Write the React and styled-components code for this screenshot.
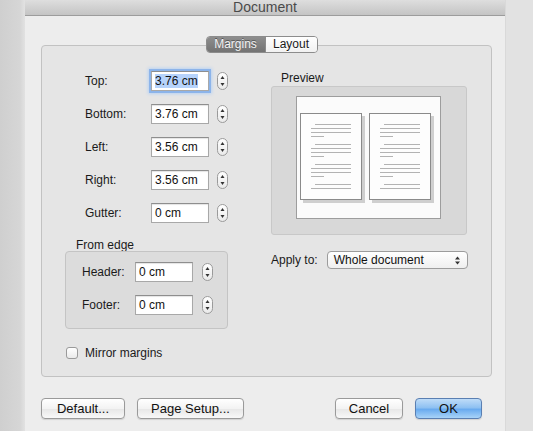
import styled, { createGlobalStyle } from "styled-components";

const GlobalStyle = createGlobalStyle`
  html, body {
    margin: 0;
    padding: 0;
    background: #d4d4d4;
    font-family: "Liberation Sans", Arial, sans-serif;
  }
`;

const Screen = styled.div`
  width: 533px;
  height: 431px;
  overflow: hidden;
  display: flex;
  background: linear-gradient(90deg, #cfcfcf 0px, #d6d6d6 20px, #e2e2e2 25px);
`;

const Window = styled.div`
  margin-left: 25px;
  width: 480px;
  height: 460px;
  background: #ededed;
  display: flex;
  flex-direction: column;
  box-shadow: 1px 0 0 #d9d9d9;
`;

const TitleBar = styled.div`
  height: 15px;
  background: linear-gradient(#dedede, #c4c4c4);
  border-bottom: 1px solid #9c9c9c;
  text-align: center;
  font-size: 14px;
  line-height: 14px;
  color: #4a4a4a;
  overflow: hidden;
`;

const Body = styled.div`
  padding: 20px 13px 0 16px;
  display: flex;
  flex-direction: column;
`;

const Tabs = styled.div`
  align-self: center;
  margin-right: 10px;
  display: flex;
  height: 17px;
  border: 1px solid #8c8c8c;
  border-radius: 4px;
  overflow: hidden;
  position: relative;
  z-index: 1;
  margin-bottom: -8px;
  box-sizing: border-box;
`;

const Tab = styled.div`
  height: 15px;
  line-height: 15px;
  font-size: 12px;
  width: ${(p) => (p.$active ? "58px" : "52px")};
  box-sizing: border-box;
  text-align: center;
  color: ${(p) => (p.$active ? "#f4f4f4" : "#1a1a1a")};
  background: ${(p) =>
    p.$active
      ? "linear-gradient(#8e8e8e, #737373)"
      : "linear-gradient(#ffffff, #f1f1f1)"};
  border-left: ${(p) => (p.$active ? "none" : "1px solid #8c8c8c")};
  text-shadow: ${(p) => (p.$active ? "0 -1px 0 #555" : "0 1px 0 #fff")};
`;

const TabBox = styled.div`
  height: 332px;
  box-sizing: border-box;
  background: #e5e5e5;
  border: 1px solid #c2c2c2;
  border-radius: 4px;
  display: grid;
  grid-template-columns: 163px 196px;
  column-gap: 43px;
  padding: 25px 0 0 23px;
`;

const LeftCol = styled.div`
  display: flex;
  flex-direction: column;
`;

const Rows = styled.div`
  display: flex;
  flex-direction: column;
  gap: 13px;
  padding-left: ${(p) => p.$indent}px;
`;

const Row = styled.div`
  display: flex;
  align-items: center;
  height: 20px;
`;

const Label = styled.span`
  width: ${(p) => p.$w}px;
  font-size: 12px;
  color: #1a1a1a;
`;

const Field = styled.div`
  width: 58px;
  height: 20px;
  box-sizing: border-box;
  background: #fff;
  border: 1px solid #a8a8a8;
  border-top-color: #8e8e8e;
  font-size: 12px;
  line-height: 18px;
  padding-left: 3px;
  color: #111;
  box-shadow: ${(p) => (p.$focus ? "0 0 0 2px #8cb4ea, 0 0 3px 3px #b9d2f3" : "inset 0 1px 1px #e4e4e4")};
`;

const Selected = styled.span`
  background: #b6d3fb;
`;

const StepperBox = styled.div`
  margin-left: ${(p) => p.$gap}px;
  width: 11px;
  height: 18px;
  display: flex;
`;

const GroupTitle = styled.div`
  font-size: 12px;
  color: #1a1a1a;
  margin: 15px 0 0 11px;
  line-height: 14px;
`;

const GroupBox = styled.div`
  margin-top: -1px;
  height: 78px;
  box-sizing: border-box;
  border: 1px solid #c4c4c4;
  border-radius: 4px;
  background: #dcdcdc;
  padding-top: 10px;
`;

const CheckRow = styled.label`
  display: flex;
  align-items: center;
  margin: 17px 0 0 1px;
  font-size: 12px;
  color: #1a1a1a;
`;

const CheckBox = styled.span`
  width: 12px;
  height: 12px;
  box-sizing: border-box;
  border: 1px solid #9a9a9a;
  border-radius: 3px;
  background: linear-gradient(#ffffff, #eaeaea);
  margin-right: 7px;
`;

const RightCol = styled.div`
  display: flex;
  flex-direction: column;
`;

const PreviewTitle = styled.div`
  font-size: 12px;
  color: #1a1a1a;
  margin: 0 0 1px 10px;
  line-height: 14px;
`;

const PreviewBox = styled.div`
  height: 149px;
  box-sizing: border-box;
  border: 1px solid #c8c8c8;
  border-radius: 3px;
  background: #d8d8d8;
  padding: 9px 0 0 24px;
`;

const ApplyRow = styled.div`
  display: flex;
  align-items: center;
  margin-top: 16px;
  font-size: 12px;
  color: #1a1a1a;
  white-space: nowrap;
`;

const Popup = styled.div`
  margin-left: 9px;
  flex-shrink: 0;
  width: 141px;
  height: 18px;
  box-sizing: border-box;
  border: 1px solid #9c9c9c;
  border-radius: 4px;
  background: linear-gradient(#ffffff, #efefef);
  display: flex;
  align-items: center;
  justify-content: space-between;
  padding: 0 7px 0 6px;
  font-size: 12px;
  color: #111;
`;

const ButtonBar = styled.div`
  display: flex;
  margin-top: 21px;
`;

const Button = styled.button`
  width: ${(p) => p.$w}px;
  height: 21px;
  margin-right: ${(p) => p.$mr || 0}px;
  box-sizing: border-box;
  padding: 0;
  border: 1px solid ${(p) => (p.$primary ? "#5a7fb2" : "#9a9a9a")};
  border-radius: 4px;
  font-family: "Liberation Sans", Arial, sans-serif;
  font-size: 13px;
  color: #111;
  background: ${(p) =>
    p.$primary
      ? "linear-gradient(#bfdcf8 0%, #8fc1f2 45%, #6aabef 55%, #a8d3f8 100%)"
      : "linear-gradient(#ffffff 0%, #f3f3f3 50%, #e8e8e8 55%, #f8f8f8 100%)"};
  box-shadow: 0 1px 1px rgba(0, 0, 0, 0.12);
`;

const Spacer = styled.div`
  flex: 1;
`;

const Stepper = ({ gap }) => (
  <StepperBox $gap={gap}>
    <svg width="11" height="18" viewBox="0 0 11 18">
      <defs>
        <linearGradient id="stg" x1="0" y1="0" x2="0" y2="1">
          <stop offset="0" stopColor="#ffffff" />
          <stop offset="1" stopColor="#e9e9e9" />
        </linearGradient>
      </defs>
      <rect x="0.5" y="0.5" width="10" height="17" rx="5" fill="url(#stg)" stroke="#9a9a9a" />
      <path d="M3.5 7 L5.5 4 L7.5 7 Z" fill="#333" />
      <path d="M3.5 11 L5.5 14 L7.5 11 Z" fill="#333" />
    </svg>
  </StepperBox>
);

const MarginRow = ({ label, value, focus, labelW, gap }) => (
  <Row>
    <Label $w={labelW}>{label}</Label>
    <Field $focus={focus}>{focus ? <Selected>{value}</Selected> : value}</Field>
    <Stepper gap={gap} />
  </Row>
);

const lineGroups = [
  [28, 32, 36, 40],
  [48, 52, 56, 60],
  [68, 72, 76, 80],
  [88, 92],
];

const PagePic = ({ x }) => (
  <g>
    <rect x={x + 3} y={20} width={62} height={87} fill="#cfcfcf" />
    <rect x={x + 0.5} y={17.5} width={61} height={86} fill="#fdfdfd" stroke="#8a8a8a" />
    {lineGroups.map((g) =>
      g.map((y, i) => {
        const start = i === 0 ? 15 : 11;
        const end = i === 3 ? 24 : 51;
        return (
          <line key={y} x1={x + start} x2={x + end} y1={y + 0.5} y2={y + 0.5} stroke="#b3b3b3" strokeWidth="1" />
        );
      })
    )}
  </g>
);

const Sheet = () => (
  <svg width="145" height="123" viewBox="0 0 145 123">
    <rect x="0.5" y="0.5" width="144" height="122" fill="#fbfbfb" stroke="#9d9d9d" />
    <PagePic x={4} />
    <PagePic x={73} />
  </svg>
);

const PopupArrows = () => (
  <svg width="5" height="9" viewBox="0 0 5 9">
    <path d="M0 3.5 L2.5 0.5 L5 3.5 Z" fill="#333" />
    <path d="M0 5.5 L2.5 8.5 L5 5.5 Z" fill="#333" />
  </svg>
);

const margins = [
  { label: "Top:", value: "3.76 cm", focus: true },
  { label: "Bottom:", value: "3.76 cm" },
  { label: "Left:", value: "3.56 cm" },
  { label: "Right:", value: "3.56 cm" },
  { label: "Gutter:", value: "0 cm" },
];

const edges = [
  { label: "Header:", value: "0 cm" },
  { label: "Footer:", value: "0 cm" },
];

export default function App() {
  return (
    <>
      <GlobalStyle />
      <Screen>
        <Window>
          <TitleBar>Document</TitleBar>
          <Body>
            <Tabs>
              <Tab $active>Margins</Tab>
              <Tab>Layout</Tab>
            </Tabs>
            <TabBox>
              <LeftCol>
                <Rows $indent={20}>
                  {margins.map((m) => (
                    <MarginRow key={m.label} {...m} labelW={66} gap={8} />
                  ))}
                </Rows>
                <GroupTitle>From edge</GroupTitle>
                <GroupBox>
                  <Rows $indent={16}>
                    {edges.map((m) => (
                      <MarginRow key={m.label} {...m} labelW={53} gap={9} />
                    ))}
                  </Rows>
                </GroupBox>
                <CheckRow>
                  <CheckBox />
                  Mirror margins
                </CheckRow>
              </LeftCol>
              <RightCol>
                <PreviewTitle>Preview</PreviewTitle>
                <PreviewBox>
                  <Sheet />
                </PreviewBox>
                <ApplyRow>
                  Apply to:
                  <Popup>
                    Whole document
                    <PopupArrows />
                  </Popup>
                </ApplyRow>
              </RightCol>
            </TabBox>
            <ButtonBar>
              <Button $w={84} $mr={12}>Default...</Button>
              <Button $w={107}>Page Setup...</Button>
              <Spacer />
              <Button $w={68} $mr={12}>Cancel</Button>
              <Button $w={67} $primary $mr={10}>OK</Button>
            </ButtonBar>
          </Body>
        </Window>
      </Screen>
    </>
  );
}
